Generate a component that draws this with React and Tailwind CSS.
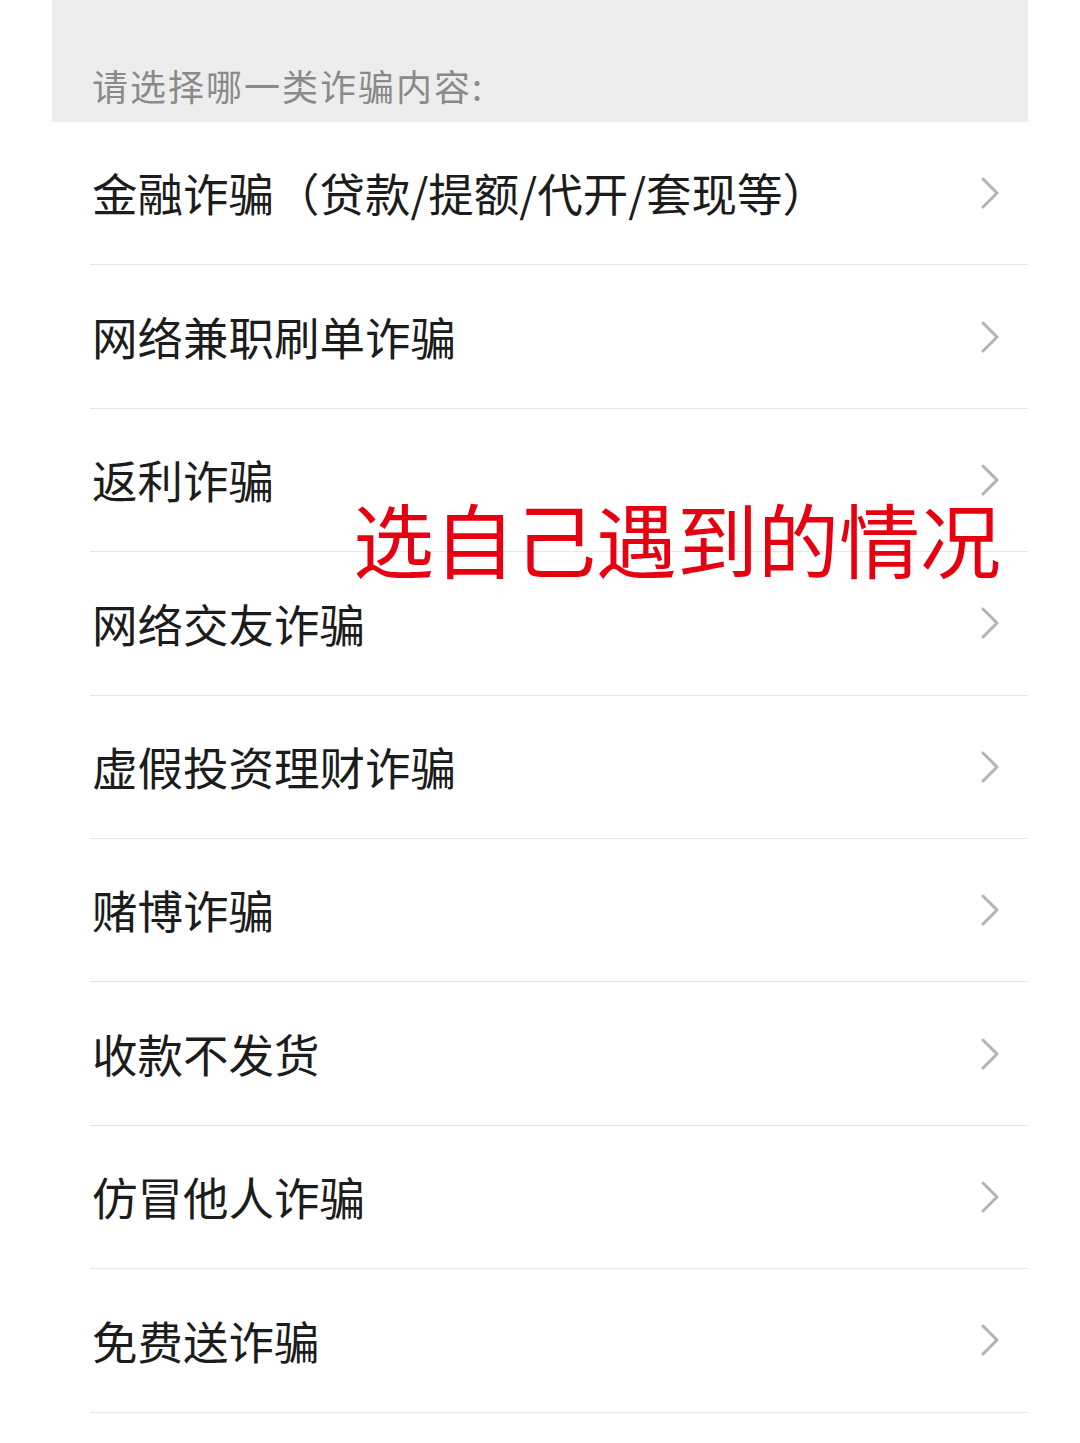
const items = [
  "金融诈骗（贷款/提额/代开/套现等）",
  "网络兼职刷单诈骗",
  "返利诈骗",
  "网络交友诈骗",
  "虚假投资理财诈骗",
  "赌博诈骗",
  "收款不发货",
  "仿冒他人诈骗",
  "免费送诈骗",
];

const Chevron = () => (
  <svg width="20" height="32" viewBox="0 0 20 32" fill="none" className="shrink-0">
    <path d="M3 2 L17 16 L3 30" stroke="#b3b3b3" strokeWidth="3" strokeLinecap="round" strokeLinejoin="round" />
  </svg>
);

export default function App() {
  return (
    <div
      className="relative w-[1080px] h-[1443px] bg-white overflow-hidden"
      style={{ fontFamily: '"Noto Sans CJK SC", "Noto Sans", sans-serif' }}
    >
      <div className="ml-[52px] w-[976px]">
        {/* section header */}
        <div className="h-[122px] bg-[#ededed] pl-[40px] flex items-end pb-[19px]">
          <span className="text-[36px] leading-none text-[#8a8a8a] tracking-[2px]">
            请选择哪一类诈骗内容:
          </span>
        </div>

        {/* list */}
        <div className="ml-[38px]">
          {items.map((label, index) => (
            <div
              key={index}
              className="h-[143.4px] border-b border-[#e6e6e6] flex items-center justify-between pl-[2px] pr-[28px]"
            >
              <span className="text-[45.5px] leading-none text-[#1c1c1c]">{label}</span>
              <Chevron />
            </div>
          ))}
        </div>
      </div>

      {/* red annotation over the list */}
      <div className="absolute left-[353px] top-[496px] text-[81px] leading-none text-[#e60010] whitespace-nowrap">
        选自己遇到的情况
      </div>
    </div>
  );
}
